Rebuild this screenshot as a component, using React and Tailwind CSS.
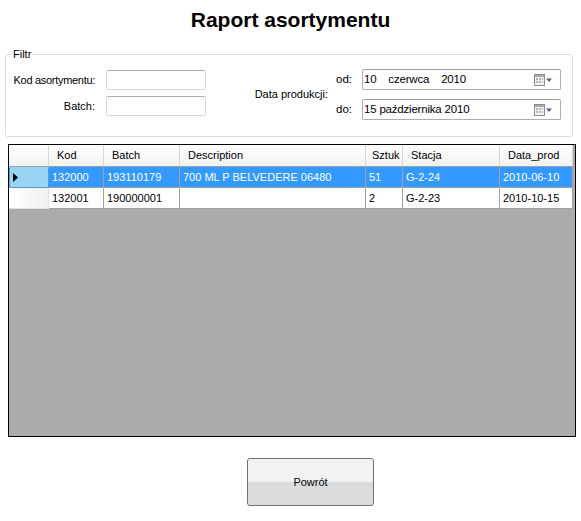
import React from "react";

const font = { fontFamily: '"Liberation Sans", Arial, sans-serif' };

const columns = [
  { key: "kod", title: "Kod", w: "w-[55px]" },
  { key: "batch", title: "Batch", w: "w-[76px]" },
  { key: "desc", title: "Description", w: "w-[186px]" },
  { key: "szt", title: "Sztuk", w: "w-[37px]", hp: "pl-[6px]" },
  { key: "stacja", title: "Stacja", w: "w-[97px]" },
  { key: "data", title: "Data_prod", w: "w-[73px]" },
];

const rows = [
  {
    kod: "132000",
    batch: "193110179",
    desc: "700 ML P BELVEDERE 06480",
    szt: "51",
    stacja: "G-2-24",
    data: "2010-06-10",
  },
  {
    kod: "132001",
    batch: "190000001",
    desc: "",
    szt: "2",
    stacja: "G-2-23",
    data: "2010-10-15",
  },
];

const CalendarIcon = () => (
  <svg width="19" height="12" viewBox="0 0 19 12">
    <rect x="0.5" y="0.5" width="10" height="11" fill="#f4f4f4" stroke="#8c8c8c" />
    <rect x="1" y="1" width="9" height="2" fill="#a9a9a9" />
    <g fill="#b5b5b5">
      <rect x="2" y="4" width="2" height="2" />
      <rect x="5" y="4" width="2" height="2" />
      <rect x="8" y="4" width="1" height="2" />
      <rect x="2" y="7" width="2" height="2" />
      <rect x="5" y="7" width="2" height="2" />
      <rect x="8" y="7" width="1" height="2" />
    </g>
    <path d="M12 4.5 L18 4.5 L15 8 Z" fill="#4d6185" />
  </svg>
);

const DatePicker = ({ value }) => (
  <div className="w-[199px] h-[21px] border border-[#abadb3] border-t-[#a0a3ab] rounded-[2px] bg-white flex items-center pl-[1px] pr-[7px]">
    <span className="flex-1 whitespace-pre text-[11.5px] tracking-[-0.2px] text-black">{value}</span>
    <CalendarIcon />
  </div>
);

const TextBox = () => (
  <div className="w-[100px] h-[20px] border border-[#d5d8dc] border-t-[#abadb3] rounded-[2px] bg-white" />
);

export default function App() {
  return (
    <div className="w-[581px] h-[521px] bg-white text-black text-[11px]" style={font}>
      <h1 className="pt-[8px] text-center text-[21px] leading-[24px] font-bold">
        Raport asortymentu
      </h1>

      <fieldset className="ml-[5px] w-[568px] mt-[16px] border border-[#d5dfe5] rounded-[3px] pb-[16px]">
        <legend className="ml-[6px] px-[1px] text-[11px] leading-[13px]">Filtr</legend>
        <div className="flex pt-[9px]">
          <div className="flex flex-col gap-[6px]">
            <div className="flex items-center">
              <span className="w-[89px] text-right tracking-[-0.3px]">Kod asortymentu:</span>
              <div className="ml-[11px]">
                <TextBox />
              </div>
            </div>
            <div className="flex items-center">
              <span className="w-[89px] text-right">Batch:</span>
              <div className="ml-[11px]">
                <TextBox />
              </div>
            </div>
          </div>

          <div className="flex items-center ml-[22px] -mt-[1px]">
            <span className="w-[100px] text-right">Data produkcji:</span>
            <div className="ml-[8px] flex flex-col gap-[9px]">
              <div className="flex items-center">
                <span className="w-[26px] text-[11.5px]">od:</span>
                <DatePicker value={"10    czerwca    2010"} />
              </div>
              <div className="flex items-center">
                <span className="w-[26px] text-[11.5px]">do:</span>
                <DatePicker value={"15 października 2010"} />
              </div>
            </div>
          </div>
        </div>
      </fieldset>

      <div className="ml-[8px] w-[568px] mt-[7px] h-[293px] border border-black bg-[#ababab] overflow-hidden">
        <div className="flex h-[22px] bg-gradient-to-b from-white to-[#f2f2f2] border-b border-[#a0a0a0] w-[564px]">
          <div className="w-[40px] border-r border-[#d5d5d5]" />
          {columns.map((c) => (
            <div
              key={c.key}
              className={`${c.w} ${c.hp || "pl-[8px]"} border-r border-[#d5d5d5] flex items-center whitespace-nowrap overflow-hidden`}
            >
              {c.title}
            </div>
          ))}
        </div>

        {rows.map((r, i) => {
          const sel = i === 0;
          return (
            <div key={r.kod} className="flex h-[21px] w-[564px]">
              <div
                className={
                  sel
                    ? "w-[40px] bg-[#99d4f5] border border-[#5a9bd0] border-t-[#9fd3f3] flex items-center pl-[3px]"
                    : "w-[40px] bg-gradient-to-r from-white to-[#f0f0f0] border-r border-b border-[#e0e0e0]"
                }
              >
                {sel && (
                  <svg width="5" height="9" viewBox="0 0 5 9">
                    <path d="M0 0 L5 4.5 L0 9 Z" fill="#000" />
                  </svg>
                )}
              </div>
              {columns.map((c) => (
                <div
                  key={c.key}
                  className={`${c.w} pl-[3px] flex items-center whitespace-nowrap overflow-hidden border-r border-b border-[#a0a0a0] ${
                    sel ? "bg-[#3399ff] text-white" : "bg-white text-black"
                  }`}
                >
                  {r[c.key]}
                </div>
              ))}
            </div>
          );
        })}
      </div>

      <div className="mt-[21px] ml-[247px]">
        <button className="w-[127px] h-[48px] border border-[#707070] rounded-[3px] bg-gradient-to-b from-[#f2f2f2] from-50% to-[#dcdcdc] to-50% text-[11px] text-black">
          Powrót
        </button>
      </div>
    </div>
  );
}
